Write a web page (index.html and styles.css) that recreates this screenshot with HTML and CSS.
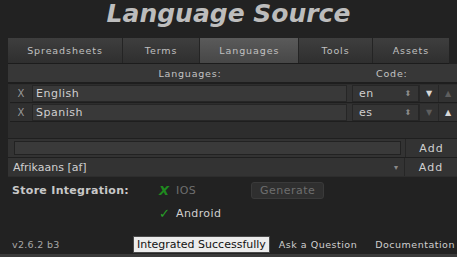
FILE: index.html
```html
<!DOCTYPE html>
<html lang="en">
  <head>
    <meta charset="UTF-8" />
    <title>Language Source</title>
    <link rel="stylesheet" href="styles.css">
  </head>
  <body>
    <h1 class="title">Language Source</h1>

    <nav class="tabs">
      <div class="tab tab-sheets">Spreadsheets</div>
      <div class="tab tab-terms">Terms</div>
      <div class="tab tab-langs active">Languages</div>
      <div class="tab tab-tools">Tools</div>
      <div class="tab tab-assets">Assets</div>
    </nav>

    <main class="panel">
      <!-- column headers -->
      <div class="head-row">
        <span class="head-name">Languages:</span>
        <span class="head-code">Code:</span>
      </div>

      <!-- language list -->
      <div class="lang-row">
        <span class="remove">X</span>
        <span class="field name">English</span>
        <span class="field code">en<span class="updown">&#x2B0D;</span></span>
        <span class="arrow">&#9660;</span>
        <span class="arrow dim">&#9650;</span>
      </div>
      <div class="lang-row">
        <span class="remove">X</span>
        <span class="field name">Spanish</span>
        <span class="field code">es<span class="updown">&#x2B0D;</span></span>
        <span class="arrow dim">&#9660;</span>
        <span class="arrow">&#9650;</span>
      </div>

      <div class="spacer"></div>

      <div class="add-row">
        <div class="add-left"><span class="text-input"></span></div>
        <span class="add-btn">Add</span>
      </div>
      <div class="add-row">
        <div class="add-left popup">Afrikaans [af]<span class="drop">&#9662;</span></div>
        <span class="add-btn">Add</span>
      </div>
    </main>

    <section class="store">
      <div class="store-row">
        <span class="store-label">Store Integration:</span>
        <span class="mark cross">X</span>
        <span class="platform off">IOS</span>
        <span class="gen-btn">Generate</span>
      </div>
      <div class="store-row">
        <span class="store-label"></span>
        <span class="mark tick">&#10003;</span>
        <span class="platform">Android</span>
      </div>
    </section>

    <footer class="footer">
      <span class="version">v2.6.2 b3</span>
      <span class="tooltip">Integrated Successfully</span>
      <span class="link">Ask a Question</span>
      <span class="link docs">Documentation</span>
    </footer>
  </body>
</html>
```

FILE: styles.css
```css
body {
  margin: 0;
  background: #222222;
  color: #c4c4c4;
  font-family: "DejaVu Sans", Verdana, sans-serif;
  font-size: 10px;
  width: 457px;
  height: 257px;
  overflow: hidden;
}
.title {
  margin: 0;
  height: 38px;
  line-height: 28px;
  text-align: center;
  font-size: 25px;
  font-weight: bold;
  font-style: italic;
  color: #bdbdbd;
}
.tabs {
  display: flex;
  margin-left: 8px;
  width: 441px;
  height: 25px;
  border-bottom: 1px solid #1c1c1c;
}
.tab {
  display: flex;
  align-items: center;
  justify-content: center;
  background: linear-gradient(#3e3e3e, #2f2f2f);
  border-right: 1px solid #242424;
  letter-spacing: 0.9px;
  color: #c0c0c0;
  font-size: 9.5px;
}
.tab-sheets { width: 115px; }
.tab-terms { width: 77px; }
.tab-langs { width: 99px; }
.tab-tools { width: 73px; }
.tab-assets { width: 77px; border-right: none; }
.tab.active {
  background: linear-gradient(#5a5a5a, #474747);
}
.panel {
  margin-left: 8px;
  background: #2d2d2d;
  padding-bottom: 1px;
}
.head-row {
  display: flex;
  height: 18px;
  align-items: center;
  background: #373737;
  border-bottom: 2px solid #1e1e1e;
  letter-spacing: 0.8px;
  font-size: 9.5px;
}
.head-name {
  width: 340px;
  padding-left: 24px;
  box-sizing: border-box;
  text-align: center;
}
.head-code {
  margin-left: 28px;
}
.lang-row {
  display: flex;
  height: 17px;
  margin-top: 1px;
  margin-left: 2px;
  border-bottom: 1px solid #1e1e1e;
  background: #333333;
}
.remove {
  width: 22px;
  display: flex;
  align-items: center;
  justify-content: center;
  background: #303030;
  color: #9a9a9a;
}
.field {
  display: flex;
  align-items: center;
  background: #393939;
  border: 1px solid #262626;
  box-sizing: border-box;
  font-size: 11px;
  color: #d0d0d0;
  letter-spacing: 0.5px;
}
.field.name {
  width: 315px;
  padding-left: 3px;
}
.field.code {
  width: 67px;
  margin-left: 5px;
  padding-left: 6px;
  justify-content: space-between;
  background: #353535;
}
.updown {
  font-size: 8px;
  color: #8a8a8a;
  margin-right: 6px;
}
.arrow {
  width: 18px;
  display: flex;
  align-items: center;
  justify-content: center;
  font-size: 8px;
  color: #d8d8d8;
  border-left: 1px solid #272727;
  background: #323232;
}
.arrow.dim {
  color: #5e5e5e;
}
.spacer {
  height: 16px;
}
.add-row {
  display: flex;
  height: 18px;
  border-top: 1px solid #1f1f1f;
  background: #333333;
}
.add-left {
  width: 397px;
  display: flex;
  align-items: center;
  border-right: 1px solid #262626;
}
.text-input {
  margin-left: 6px;
  width: 385px;
  height: 12px;
  background: #3a3a3a;
  border: 1px solid #222222;
}
.popup {
  padding-left: 5px;
  box-sizing: border-box;
  justify-content: space-between;
  color: #d0d0d0;
  font-size: 11px;
}
.drop {
  font-size: 8px;
  color: #8a8a8a;
  margin-right: 6px;
}
.add-btn {
  flex: 1;
  display: flex;
  align-items: center;
  justify-content: center;
  letter-spacing: 1px;
  font-size: 11px;
  color: #d0d0d0;
}
.store {
  padding: 2px 0 0 12px;
}
.store-row {
  display: flex;
  align-items: center;
  height: 23px;
}
.store-label {
  width: 147px;
  font-weight: bold;
  font-size: 11px;
  letter-spacing: 0.3px;
  color: #c8c8c8;
}
.mark {
  width: 17px;
  font-size: 13px;
  font-weight: bold;
}
.cross {
  color: #1f8a1f;
  font-style: italic;
}
.tick {
  color: #28a028;
  font-weight: normal;
}
.platform {
  font-size: 11px;
  color: #d0d0d0;
  letter-spacing: 0.4px;
}
.platform.off {
  color: #6e6e6e;
  width: 75px;
}
.gen-btn {
  padding: 1px 8px;
  background: #2f2f2f;
  border: 1px solid #3a3a3a;
  border-radius: 3px;
  color: #6e6e6e;
  font-size: 11px;
  letter-spacing: 0.5px;
}
.footer {
  display: flex;
  align-items: center;
  margin-top: 9px;
  height: 20px;
  padding-left: 12px;
  border-bottom: 3px solid #3a3a3a;
  white-space: nowrap;
}
.version {
  width: 121px;
  color: #a8a8a8;
  letter-spacing: 0.3px;
  font-size: 9.5px;
}
.tooltip {
  background: #ececec;
  color: #111111;
  border: 1px solid #4a4a4a;
  padding: 1px 3px;
  font-size: 11px;
}
.link {
  margin-left: 9px;
  letter-spacing: 0.5px;
  color: #d0d0d0;
  font-size: 9.5px;
}
.link.docs {
  margin-left: 18px;
}
```
